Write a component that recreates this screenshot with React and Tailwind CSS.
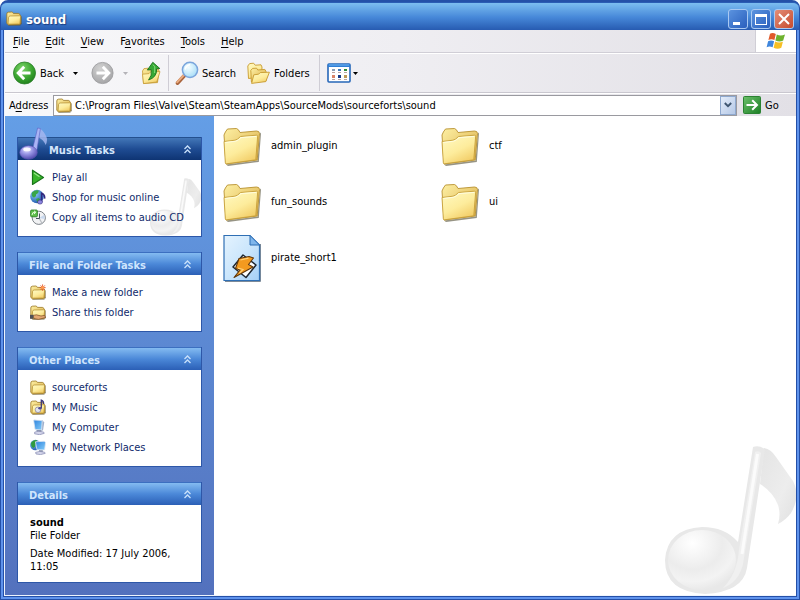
import React from 'react'

/* ---------- shared gradients ---------- */

function Gradients() {
  return (
    <svg className="absolute size-0" aria-hidden="true">
      <defs>
        <linearGradient id="folderFront" x1="0" y1="0" x2="0.6" y2="1">
          <stop offset="0" stopColor="#fffac4" />
          <stop offset="0.6" stopColor="#fdec9c" />
          <stop offset="1" stopColor="#f3cf6a" />
        </linearGradient>
        <linearGradient id="folderBack" x1="0" y1="0" x2="1" y2="1">
          <stop offset="0" stopColor="#fdf0a4" />
          <stop offset="1" stopColor="#d9a941" />
        </linearGradient>
        <radialGradient id="greenBall" cx="0.4" cy="0.3" r="0.75">
          <stop offset="0" stopColor="#7fd56c" />
          <stop offset="0.6" stopColor="#3aa52f" />
          <stop offset="1" stopColor="#1f7d1c" />
        </radialGradient>
        <radialGradient id="greyBall" cx="0.4" cy="0.3" r="0.75">
          <stop offset="0" stopColor="#d2d2d2" />
          <stop offset="1" stopColor="#a3a3a5" />
        </radialGradient>
        <radialGradient id="lens" cx="0.4" cy="0.35" r="0.7">
          <stop offset="0" stopColor="#f4fdff" />
          <stop offset="1" stopColor="#a5dcf7" />
        </radialGradient>
        <linearGradient id="goGreen" x1="0" y1="0" x2="1" y2="1">
          <stop offset="0" stopColor="#6cc06b" />
          <stop offset="1" stopColor="#1c7f25" />
        </linearGradient>
        <linearGradient id="page" x1="0" y1="0" x2="1" y2="1">
          <stop offset="0" stopColor="#e4f3fe" />
          <stop offset="0.5" stopColor="#cbe6fc" />
          <stop offset="1" stopColor="#a4cff6" />
        </linearGradient>
        <radialGradient id="noteHead" cx="0.36" cy="0.22" r="0.8">
          <stop offset="0" stopColor="#ffffff" />
          <stop offset="0.55" stopColor="#ececec" />
          <stop offset="0.8" stopColor="#f3f3f3" />
          <stop offset="1" stopColor="#e8e8e8" />
        </radialGradient>
        <linearGradient id="noteFlag" x1="0" y1="0" x2="1" y2="1">
          <stop offset="0" stopColor="#e4e4e4" />
          <stop offset="0.6" stopColor="#ededed" />
          <stop offset="1" stopColor="#e0e0e0" />
        </linearGradient>
        <radialGradient id="purpleHead" cx="0.4" cy="0.3" r="0.7">
          <stop offset="0" stopColor="#e6e4ff" />
          <stop offset="0.45" stopColor="#9a97e6" />
          <stop offset="1" stopColor="#544cb0" />
        </radialGradient>
        <linearGradient id="screen" x1="0" y1="0" x2="1" y2="1">
          <stop offset="0" stopColor="#2f83dd" />
          <stop offset="1" stopColor="#84cdfa" />
        </linearGradient>
        <radialGradient id="globe" cx="0.35" cy="0.3" r="0.75">
          <stop offset="0" stopColor="#8fd0f7" />
          <stop offset="1" stopColor="#1c56ae" />
        </radialGradient>
      </defs>
    </svg>
  )
}

/* ---------- icons ---------- */

function BigFolder() {
  return (
    <svg className="h-[39px] w-[39px]" viewBox="0 0 39 39" aria-hidden="true">
      <path d="M3 37.500 34.500 33.500 37 5.500 38 6.500 35.800 35 5 39z" fill="#5f5a42" opacity=".65" />
      <path d="M1 8Q2 5 4.500 2L13.500 1.500Q15.500 2 17 5.500L33.500 4Q36.500 4 36.500 6.500L34.200 33 3 37z" fill="url(#folderBack)" stroke="#b8912f" strokeWidth=".9" />
      <path d="M1 14.500 12 13.200Q14.500 12.800 17.500 9.500L33.500 8.200Q34.800 8.200 34.600 9.700L32.800 32.800 3.500 36.800Q2.400 36.800 2.300 35.500z" fill="url(#folderFront)" stroke="#c69f3a" strokeWidth=".9" />
      <path d="M2.200 15.500 12.800 14.200Q15 13.500 18 10.600L33.400 9.400" fill="none" stroke="#fffde0" />
    </svg>
  )
}

function SmallFolder({ children }) {
  return (
    <svg className="size-4 shrink-0" viewBox="0 0 16 16" aria-hidden="true">
      <path d="M2.500 15.400 14.400 15.200 15.800 13V6.500" fill="none" stroke="#5d563c" opacity=".6" />
      <path d="M.8 13.400V4Q.8 2.400 2.200 2.200L5.800 2Q6.800 2 7.400 3.400L12.400 3.400Q13.600 3.500 13.800 4.600L14.800 6.200V13Q14.800 14.400 13.400 14.600L2.400 14.800z" fill="url(#folderBack)" stroke="#98751f" strokeWidth=".8" />
      <path d="M2.600 7.200Q2.900 6 4.200 6L13.600 5.800Q14.700 5.900 14.500 7L14 13.200Q13.800 14.100 12.800 14.100L2 14.200z" fill="url(#folderFront)" stroke="#b08a2a" strokeWidth=".7" />
      {children}
    </svg>
  )
}

function BackIcon() {
  return (
    <svg className="size-6" viewBox="0 0 24 24" aria-hidden="true">
      <circle cx="12.500" cy="12" r="11" fill="url(#greenBall)" stroke="#2c7f2a" strokeWidth=".8" />
      <path d="M12.200 5.800 6.200 12l6 6.200M6.800 12H18.500" fill="none" stroke="#fff" strokeWidth="2.900" />
    </svg>
  )
}

function ForwardIcon() {
  return (
    <svg className="size-6" viewBox="0 0 24 24" aria-hidden="true">
      <circle cx="11.500" cy="12" r="10.600" fill="url(#greyBall)" stroke="#98989a" strokeWidth=".8" />
      <path d="M11.800 5.800 17.800 12l-6 6.200M17.200 12H5.500" fill="none" stroke="#fff" strokeWidth="2.900" />
    </svg>
  )
}

function UpIcon() {
  return (
    <svg className="size-6" viewBox="0 0 24 24" aria-hidden="true">
      <path d="M2.500 10 4 7.600l4-.4L9.500 9 18 7.600l1 2-1.500 12L3.500 22.400z" fill="url(#folderBack)" stroke="#c79c35" strokeWidth=".8" />
      <path d="M2.500 13.200 9 12.600l2-2h9l-3.200 10.400L3.500 22.600z" fill="url(#folderFront)" stroke="#c79c35" strokeWidth=".8" />
      <path d="M12.800 1.300 19.800 7.500 16.600 7.800Q17.200 16.200 8.600 19 12.400 14.600 11.200 8.600L7.400 9z" fill="#35a935" stroke="#17701b" strokeWidth=".9" strokeLinejoin="round" />
      <path d="M13 3.600 14.800 5.800 14.600 12" fill="none" stroke="#86dc7a" />
    </svg>
  )
}

function SearchIcon() {
  return (
    <svg className="size-6" viewBox="0 0 24 24" aria-hidden="true">
      <path d="M9.500 14.500 2.600 22" stroke="#a8623a" strokeWidth="3.800" strokeLinecap="round" />
      <path d="M9 14 2.200 21.200" stroke="#e8ab80" strokeWidth="2" strokeLinecap="round" />
      <circle cx="15" cy="8.800" r="7.600" fill="url(#lens)" stroke="#7ba5dc" strokeWidth="1.500" />
      <path d="M10.200 8Q11 4.600 14.600 3.800" fill="none" stroke="#fff" strokeWidth="1.500" strokeLinecap="round" />
    </svg>
  )
}

function FoldersIcon() {
  return (
    <svg className="size-6" viewBox="0 0 24 24" aria-hidden="true">
      <path d="M1.500 17.500.8 5 2.600 2.600 6.600 2.200 8.200 4.200 14 3.800 15 6 14.600 16z" fill="url(#folderFront)" stroke="#c79a2f" strokeWidth=".9" />
      <path d="M4.400 21 3.800 9.400 5.600 7.400l4-.2L10.800 9l7-.6 1.200 2V20z" fill="url(#folderBack)" stroke="#c79a2f" strokeWidth=".9" />
      <path d="M6.800 13.800 11.600 13.200l1.600-1.600 9.200-.4-3.600 9.400L4.600 22.400z" fill="url(#folderFront)" stroke="#c79a2f" strokeWidth=".9" />
    </svg>
  )
}

function ViewsIcon() {
  return (
    <svg className="h-5 w-6" viewBox="0 0 24 20" aria-hidden="true">
      <rect x="1" y="1" width="22" height="18" rx="1" fill="#fff" stroke="#2667b8" strokeWidth="1.600" />
      <rect x="1" y="1" width="22" height="3" fill="#2f7fd6" />
      <path d="M2 2h20" stroke="#74b4f0" />
      <rect x="5" y="6" width="3" height="2" fill="#8c9fb3" />
      <rect x="11" y="6" width="3" height="2" fill="#3f78b8" />
      <rect x="17" y="6" width="3" height="2" fill="#2e8d3a" />
      <path d="M5 9.500h3M11 9.500h3M17 9.500h3M5 16.500h3M11 16.500h3M17 16.500h3" stroke="#b9a3a0" />
      <rect x="5" y="12" width="3" height="3" fill="#d98468" />
      <rect x="11" y="12" width="3" height="3" fill="#173a86" />
      <rect x="17" y="12" width="3" height="3" fill="#bd9a57" />
    </svg>
  )
}

function Caret({ className }) {
  return (
    <svg className={className} width="5" height="3" viewBox="0 0 5 3" aria-hidden="true">
      <path d="M0 0h5L2.500 3z" fill="currentColor" />
    </svg>
  )
}

function WindowsFlag() {
  return (
    <svg className="h-[18px] w-5" viewBox="0 0 20 18" aria-hidden="true">
      <path d="M4 1.800Q6.500.2 9.800 2L8.400 8Q5.400 6.600 2.400 8z" fill="#e0592b" />
      <path d="M10.800 2.400Q14.500 4.400 19 2.400L17.200 8.600Q13.400 10.400 9.400 8.400z" fill="#6eb22f" />
      <path d="M2.100 9.200Q5 7.800 8.100 9.200L6.600 15.200Q3.600 13.800.6 15.200z" fill="#3f86dd" />
      <path d="M9.100 9.600Q13 11.400 16.900 9.800L15.300 15.800Q11.500 17.800 7.600 15.800z" fill="#f6bf25" />
    </svg>
  )
}

function PlayIcon() {
  return (
    <svg className="size-4 shrink-0" viewBox="0 0 16 16" aria-hidden="true">
      <path d="M2.500 1.200 13.500 8.500 2.500 15.500z" fill="#39b52c" stroke="#19751a" strokeWidth="1.200" strokeLinejoin="round" />
      <path d="M4 4 9.500 7.800" stroke="#98e58a" strokeWidth="1.200" />
    </svg>
  )
}

function ShopIcon() {
  return (
    <svg className="size-4 shrink-0" viewBox="0 0 16 16" aria-hidden="true">
      <circle cx="7" cy="7.500" r="6.800" fill="url(#globe)" />
      <path d="M2 3.600Q5 .4 8.600 1.400 9 4 6 5.400 6.400 8 3.600 8.600 1.200 7.400 2 3.600zM6 10l3-1 1 2-2.400 3z" fill="#3aa648" />
      <path d="M11.600 13V4.200Q15.200 5.600 14.600 9.600" fill="none" stroke="#33287f" strokeWidth="1.500" />
      <ellipse cx="10" cy="13" rx="2.500" ry="2.100" fill="#8d87e0" stroke="#33287f" strokeWidth=".6" />
    </svg>
  )
}

function CopyCdIcon() {
  return (
    <svg className="size-4 shrink-0" viewBox="0 0 16 16" aria-hidden="true">
      <circle cx="8.800" cy="8.800" r="6.600" fill="#f1f2f4" stroke="#7c8288" strokeWidth="1" />
      <path d="M9 9 14 6A6 6 0 0 1 14.800 10z" fill="#c8d8ee" />
      <path d="M9 9 12 14.200" stroke="#b9bdc2" strokeWidth="1.200" />
      <path d="M9.500 4.500v5H6" fill="none" stroke="#4e5660" />
      <rect x=".6" y="1" width="6.800" height="6.800" rx="1" fill="#5fbf4a" stroke="#23771f" strokeWidth=".8" />
      <path d="M2 6Q1.800 3 5.400 3.200M4 1.800 5.800 3.300 4 5" fill="none" stroke="#e9ffe0" />
    </svg>
  )
}

function NewFolderIcon() {
  return (
    <SmallFolder>
      <path d="M12.600.4v6.400M9.600 3.600h6M10.600 1.400l4.200 4.600M14.800 1.400l-4.200 4.600" stroke="#e4572b" strokeWidth=".9" />
      <circle cx="12.600" cy="3.600" r="1.500" fill="#ff9a50" />
    </SmallFolder>
  )
}

function ShareFolderIcon() {
  return (
    <SmallFolder>
      <path d="M3 11.400 6.500 10.800 11 12 14.600 11.400 15.600 13.600 8.400 15.400 4 14.600z" fill="#e3a772" stroke="#7a4c24" strokeWidth=".7" />
      <path d="M0 10.800h3.400v4H0z" fill="#4f5157" />
    </SmallFolder>
  )
}

function MyMusicIcon() {
  return (
    <SmallFolder>
      <circle cx="8" cy="10.800" r="2.800" fill="#dfe3ef" stroke="#7f7a9c" strokeWidth=".7" />
      <path d="M11.300 9V1.200Q14 2.400 13.500 5" fill="none" stroke="#3e3879" strokeWidth="1.300" />
      <ellipse cx="10" cy="9.200" rx="1.700" ry="1.300" fill="#4e4790" />
    </SmallFolder>
  )
}

function ComputerIcon() {
  return (
    <svg className="size-4 shrink-0" viewBox="0 0 16 16" aria-hidden="true">
      <path d="M4 .8 12.800 1.400 14.200 3.600 13 11.400 6 11.800z" fill="#9fb0cc" />
      <path d="M3.600 1 12.200 1.600 11.600 11 5 10.400z" fill="url(#screen)" stroke="#dfe7f2" strokeWidth=".8" />
      <path d="M7 11h4.400v2H7z" fill="#8e97ae" />
      <path d="M4.600 13.200 8 12.200l5.600.8.600 1.400-4.600 1.300-5-.9z" fill="#d3d4ea" stroke="#8589b0" strokeWidth=".7" />
    </svg>
  )
}

function NetworkIcon() {
  return (
    <svg className="size-4 shrink-0" viewBox="0 0 16 16" aria-hidden="true">
      <circle cx="5.400" cy="6" r="5.300" fill="url(#globe)" />
      <path d="M1 4Q3 .6 6.800 1 7.400 4 5.600 5 5.400 8.600 3 9 .6 7 1 4z" fill="#2f9a3f" />
      <path d="M5.400 2.800 14.400 2.200 15.600 3.600 14.600 11 7 10.800z" fill="url(#screen)" stroke="#dfe7f2" strokeWidth=".8" />
      <path d="M9 11.200h3.800V13H9z" fill="#8e97ae" />
      <path d="M5.600 13.400 9.600 12.400l5 .8.600 1.200-4.600 1.200-4.600-.6z" fill="#d3d4ea" stroke="#8589b0" strokeWidth=".7" />
    </svg>
  )
}

function WinampFile() {
  return (
    <svg className="h-12 w-[39px]" viewBox="0 0 39 48" aria-hidden="true">
      <path d="M2 47.500h35.500V10" fill="none" stroke="#7d8a98" />
      <path d="M1 1.500h26l9.500 9.500v35.500H1z" fill="url(#page)" stroke="#2f6fb4" strokeWidth="1.200" />
      <path d="M27 1.500v9.500h9.500z" fill="#7fb6ec" stroke="#2f6fb4" strokeLinejoin="round" />
      <path d="M20 21 33 31 23 43.500 10 33z" fill="#fff" stroke="#1d2630" strokeWidth="1.500" strokeLinejoin="round" />
      <path d="M16 24.500 26 22.500 30.500 24 25.500 30.500 30 33 11 43.500 17 36 12.500 34.500z" fill="#f39a1f" stroke="#5f360a" strokeWidth="1.100" strokeLinejoin="round" />
      <path d="M17.500 26 25.500 24.200M15 34.200 20 35.500 16.500 39.200" fill="none" stroke="#ffd27a" strokeWidth="1.200" />
    </svg>
  )
}

/* Eighth note used as the folder watermark */
function NoteShape({ className }) {
  return (
    <svg className={className} viewBox="0 0 131 149" aria-hidden="true">
      <path d="M99 2Q106 3 111 11L128 35Q136 50 126 67 121 74 113 78 116 68 113 59 108 46 95 38z" fill="url(#noteFlag)" />
      <path d="M88 1Q94-1 100 3L82 122Q78 146 40 148 0 146 0 114 2 83 37 81 60 81 73 96z" fill="#e8e8e8" />
      <ellipse cx="37" cy="114" rx="34" ry="30" fill="url(#noteHead)" />
      <path d="M90 6Q94 4 96 7L78 118Q74 136 58 142 72 128 74 104z" fill="#f0f0f0" />
      <path d="M92.500 8 77 108" stroke="#fbfbfb" strokeWidth="3" />
    </svg>
  )
}

function PurpleNote() {
  return (
    <svg className="h-[34px] w-[30px]" viewBox="0 0 30 34" aria-hidden="true">
      <path d="M20 1Q24 3 26.500 8 29.500 13 26.500 18 25 13 19 10z" fill="#a3b6ee" opacity=".85" />
      <path d="M18.600 1 21.400 1.600 17.400 26 13.600 22z" fill="#a9b4f4" stroke="#5a60c4" strokeWidth=".6" />
      <ellipse cx="9.500" cy="25.500" rx="8.800" ry="6.800" fill="url(#purpleHead)" stroke="#5a54b4" strokeWidth=".6" />
      <ellipse cx="8" cy="22.400" rx="3.800" ry="1.900" fill="#fff" opacity=".85" />
    </svg>
  )
}

function Chevrons() {
  return (
    <svg className="h-[9px] w-[9px]" viewBox="0 0 9 9" aria-hidden="true">
      <path d="M1.500 4 4.500 1l3 3M1.500 8 4.500 5l3 3" fill="none" stroke="#c8e0fb" strokeWidth="1.300" />
    </svg>
  )
}

/* ---------- chrome ---------- */

const menuItems = [
  ['', 'F', 'ile'],
  ['', 'E', 'dit'],
  ['', 'V', 'iew'],
  ['F', 'a', 'vorites'],
  ['', 'T', 'ools'],
  ['', 'H', 'elp'],
]

function TitleBar() {
  const btn = 'flex size-5 items-center justify-center rounded-[3px] border border-[#a9c9f2]'
  return (
    <header className="flex h-[30px] items-center rounded-t-md border-t border-[#2a5db4] bg-linear-to-b from-[#7cbdf0] via-[#4687d8] to-[#2354ab] px-[5px]">
      <SmallFolder />
      <h1 className="ml-1 flex-1 pt-1 text-[13px] leading-4 font-bold text-white [text-shadow:1px_1px_1px_#1b3d80]">sound</h1>
      <div className="flex gap-[3px] pt-[3px]">
        <button className={`${btn} bg-linear-to-br from-[#5b93df] to-[#2a5fbd]`} aria-label="Minimize">
          <span className="mt-2 mr-1 h-[3px] w-[7px] bg-white" />
        </button>
        <button className={`${btn} bg-linear-to-br from-[#5b93df] to-[#2a5fbd]`} aria-label="Maximize">
          <span className="h-[11px] w-3 border border-t-[3px] border-white" />
        </button>
        <button className={`${btn} bg-linear-to-br from-[#e38d77] to-[#c64a2c]`} aria-label="Close">
          <svg className="size-3" viewBox="0 0 12 12"><path d="M1 1l10 10M11 1 1 11" stroke="#fff" strokeWidth="2" /></svg>
        </button>
      </div>
    </header>
  )
}

function MenuBar() {
  return (
    <nav className="flex h-[23px] items-stretch border-b border-[#d0ced6]">
      <div className="flex flex-1 items-center gap-4 pt-[2px] pl-2">
        {menuItems.map(([pre, key, post]) => (
          <button key={key} className="leading-4">
            {pre}<u className="underline-offset-2">{key}</u>{post}
          </button>
        ))}
      </div>
      <div className="flex w-[41px] items-center justify-center border-l border-[#d0ced6] bg-white">
        <WindowsFlag />
      </div>
    </nav>
  )
}

function Toolbar() {
  return (
    <div className="flex h-10 items-center border-t border-b border-t-white border-b-[#c9c7cf] pl-[7px]">
      <button className="flex items-center gap-1"><BackIcon /><span className="pt-[2px]">Back</span></button>
      <button className="ml-[9px]" aria-label="Back history"><Caret className="text-black" /></button>
      <button className="ml-[13px]" aria-label="Forward" disabled><ForwardIcon /></button>
      <button className="ml-2" aria-label="Forward history" disabled><Caret className="text-[#b4b3b8]" /></button>
      <button className="ml-3" aria-label="Up"><UpIcon /></button>
      <div className="ml-1 h-9 w-px bg-[#cfcdd5]" />
      <button className="ml-[6px] flex items-center gap-[3px]"><SearchIcon /><span className="pt-[2px]">Search</span></button>
      <button className="ml-[11px] flex items-center gap-[3px]"><FoldersIcon /><span className="pt-[2px]">Folders</span></button>
      <div className="ml-[9px] h-9 w-px bg-[#cfcdd5]" />
      <button className="ml-[7px] flex items-center gap-[2px]" aria-label="Views">
        <ViewsIcon /><Caret className="text-black" />
      </button>
    </div>
  )
}

function AddressBar() {
  return (
    <form className="flex h-[23px] items-center border-t border-white pl-1" onSubmit={(e) => e.preventDefault()}>
      <label htmlFor="address" className="w-11 shrink-0 pt-[2px]">A<u className="underline-offset-2">d</u>dress</label>
      <div className="flex h-[21px] min-w-0 flex-1 items-center border border-[#9a9aa0] bg-white pl-[2px]">
        <SmallFolder />
        <input
          id="address"
          className="ml-[3px] min-w-0 flex-1 pt-[2px] outline-none"
          defaultValue="C:\Program Files\Valve\Steam\SteamApps\SourceMods\sourceforts\sound"
        />
        <button type="button" className="flex h-[19px] w-4 items-center justify-center border border-[#8fa9cf] bg-linear-to-br from-[#e4edfa] to-[#b5c8e6]" aria-label="Show addresses">
          <svg className="h-[6px] w-2" viewBox="0 0 8 6"><path d="M.8 1 4 4.200 7.200 1" fill="none" stroke="#3e5570" strokeWidth="1.900" /></svg>
        </button>
      </div>
      <button className="ml-[6px] flex w-[53px] items-center gap-1 text-left">
        <svg className="size-[18px]" viewBox="0 0 18 18" aria-hidden="true">
          <rect x=".5" y=".5" width="17" height="17" rx="1" fill="url(#goGreen)" stroke="#2b8232" />
          <path d="M3.500 9h10M9.200 4.200 14 9l-4.800 4.800" fill="none" stroke="#fff" strokeWidth="2" />
        </svg>
        <span className="pt-[2px]">Go</span>
      </button>
    </form>
  )
}

/* ---------- task pane ---------- */

function Panel({ title, primary, children }) {
  return (
    <section className="relative border border-t-0 border-[#2d57a8] bg-white">
      <h2
        className={`flex h-[23px] items-center justify-between border-t pr-[9px] font-bold ${
          primary
            ? 'border-[#23508f] bg-linear-to-b from-[#4377b8] via-[#1f4c93] to-[#0e3473] pl-[31px] text-[#d5e6fb]'
            : 'border-[#3c6fc0] bg-linear-to-b from-[#84bbf1] via-[#4b88d8] to-[#2b5fb6] pl-[11px] text-[#cfe5fd]'
        }`}
      >
        <span className="pt-1">{title}</span>
        <button aria-label={`Collapse ${title}`}><Chevrons /></button>
      </h2>
      {primary && (
        <>
          <div className="absolute -top-[10px] left-[1px]"><PurpleNote /></div>
          <NoteShape className="absolute right-0 bottom-0 h-[58px] w-[51px]" />
        </>
      )}
      {children}
    </section>
  )
}

function TaskList({ items }) {
  return (
    <ul className="relative pt-[7px] pb-[9px] pl-3">
      {items.map(([Icon, label]) => (
        <li key={label} className="h-5">
          <a href="#" className="flex h-5 items-center gap-[6px] text-[#0f2a6b]">
            <Icon />
            <span className="pt-[2px] whitespace-nowrap">{label}</span>
          </a>
        </li>
      ))}
    </ul>
  )
}

const musicTasks = [
  [PlayIcon, 'Play all'],
  [ShopIcon, 'Shop for music online'],
  [CopyCdIcon, 'Copy all items to audio CD'],
]
const folderTasks = [
  [NewFolderIcon, 'Make a new folder'],
  [ShareFolderIcon, 'Share this folder'],
]
const otherPlaces = [
  [SmallFolder, 'sourceforts'],
  [MyMusicIcon, 'My Music'],
  [ComputerIcon, 'My Computer'],
  [NetworkIcon, 'My Network Places'],
]

function TaskPane() {
  return (
    <aside className="flex w-[209px] shrink-0 flex-col gap-[15px] bg-linear-to-b from-[#649ee6] to-[#5371bd] px-3 pt-[21px]">
      <Panel title="Music Tasks" primary><TaskList items={musicTasks} /></Panel>
      <Panel title="File and Folder Tasks"><TaskList items={folderTasks} /></Panel>
      <Panel title="Other Places"><TaskList items={otherPlaces} /></Panel>
      <Panel title="Details">
        <div className="px-3 pt-[11px] pb-[9px] leading-[13px]">
          <p className="font-bold">sound</p>
          <p>File Folder</p>
          <p className="mt-[5px]">Date Modified: 17 July 2006, 11:05</p>
        </div>
      </Panel>
    </aside>
  )
}

/* ---------- file list ---------- */

const files = [
  { name: 'admin_plugin', Icon: BigFolder },
  { name: 'ctf', Icon: BigFolder },
  { name: 'fun_sounds', Icon: BigFolder },
  { name: 'ui', Icon: BigFolder },
  { name: 'pirate_short1', Icon: WinampFile },
]

function FileList() {
  return (
    <main className="relative flex-1 bg-white">
      <NoteShape className="absolute right-0 bottom-0 h-[149px] w-[131px]" />
      <ul className="relative grid grid-cols-[repeat(auto-fill,218px)] gap-y-2 pt-[6px] pl-[5px]">
        {files.map(({ name, Icon }) => (
          <li key={name} className="flex h-12 items-center">
            <span className="flex w-12 justify-center pr-[2px]"><Icon /></span>
            <span className="ml-1">{name}</span>
          </li>
        ))}
      </ul>
    </main>
  )
}

export default function App() {
  return (
    <div className="flex min-h-screen flex-col rounded-t-lg border border-t-2 border-[#2450a8] bg-[#3a6fcf] font-['DejaVu_Sans_Condensed','DejaVu_Sans',sans-serif] text-[11px] leading-4 text-black">
      <Gradients />
      <TitleBar />
      <div className="-mt-[2px] flex flex-1 flex-col border-x-2 border-b-2 border-[#5f93ec]">
        <div className="flex flex-1 flex-col border-x border-b border-[#2450a8]">
          <div className="flex flex-1 flex-col border-b border-l border-[#eef4fd]">
            <div className="bg-linear-to-r from-[#f8f8fa] via-[#efeef2] to-[#e2e0e6]">
              <MenuBar />
              <Toolbar />
              <AddressBar />
            </div>
            <div className="flex flex-1">
              <TaskPane />
              <FileList />
            </div>
          </div>
        </div>
      </div>
    </div>
  )
}
